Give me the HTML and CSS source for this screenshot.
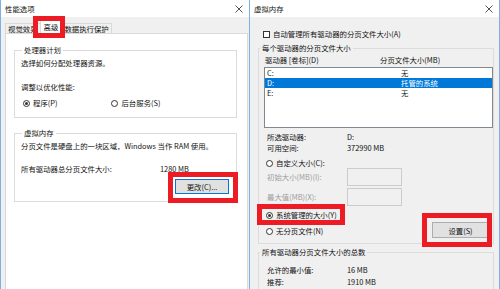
FILE: index.html
```html
<!DOCTYPE html>
<html lang="zh-CN">
<head>
    <meta charset="UTF-8">
    <title>性能选项 - 虚拟内存</title>
    <link rel="stylesheet" href="styles.css">
</head>
<body>
    <div class="screen">
        <div class="window perf">
            <div class="titlebar">
                <span class="title">性能选项</span>
                <svg class="close" width="8" height="8" viewBox="0 0 8 8"><path d="M0.5 0.5L7.5 7.5M7.5 0.5L0.5 7.5"/></svg>
            </div>
            <div class="body">
                <div class="tabs">
                    <div class="tab">视觉效果</div>
                    <div class="tab active">高级</div>
                    <div class="tab">数据执行保护</div>
                </div>
                <div class="tab-page">
                    <fieldset class="group cpu">
                        <legend>处理器计划</legend>
                        <p class="line gap-3">选择如何分配处理器资源。</p>
                        <p class="line gap-14">调整以优化性能:</p>
                        <div class="radios">
                            <label class="radio"><span class="dot checked"></span>程序(P)</label>
                            <label class="radio"><span class="dot"></span>后台服务(S)</label>
                        </div>
                    </fieldset>
                    <fieldset class="group vmem">
                        <legend>虚拟内存</legend>
                        <p class="line gap-3">分页文件是硬盘上的一块区域，Windows 当作 RAM 使用。</p>
                        <div class="line total">
                            <span class="total-label">所有驱动器总分页文件大小:</span>
                            <span>1280 MB</span>
                        </div>
                        <div class="btn-row">
                            <button class="btn default">更改(C)...</button>
                        </div>
                    </fieldset>
                </div>
            </div>
        </div>

        <div class="window vm">
            <div class="titlebar">
                <span class="title">虚拟内存</span>
                <svg class="close" width="8" height="8" viewBox="0 0 8 8"><path d="M0.5 0.5L7.5 7.5M7.5 0.5L0.5 7.5"/></svg>
            </div>
            <div class="body">
                <label class="check"><span class="box"></span>自动管理所有驱动器的分页文件大小(A)</label>

                <fieldset class="group drives">
                    <legend>每个驱动器的分页文件大小</legend>
                    <div class="list-head">
                        <span class="col-drive">驱动器 [卷标](D)</span>
                        <span>分页文件大小(MB)</span>
                    </div>
                    <div class="listbox">
                        <div class="row"><span class="cell-drive">C:</span><span>无</span></div>
                        <div class="row selected"><span class="cell-drive">D:</span><span>托管的系统</span></div>
                        <div class="row"><span class="cell-drive">E:</span><span>无</span></div>
                    </div>
                    <div class="info first"><span class="info-label">所选驱动器:</span><span>D:</span></div>
                    <div class="info"><span class="info-label">可用空间:</span><span>372990 MB</span></div>

                    <label class="radio custom"><span class="dot"></span>自定义大小(C):</label>
                    <div class="field">
                        <span class="info-label">初始大小(MB)(I):</span>
                        <span class="input"></span>
                    </div>
                    <div class="field second">
                        <span class="info-label">最大值(MB)(X):</span>
                        <span class="input"></span>
                    </div>

                    <div class="choose">
                        <div class="choose-radios">
                            <label class="radio"><span class="dot checked"></span>系统管理的大小(Y)</label>
                            <label class="radio none"><span class="dot"></span>无分页文件(N)</label>
                        </div>
                        <button class="btn set">设置(S)</button>
                    </div>
                </fieldset>

                <fieldset class="group totals">
                    <legend>所有驱动器分页文件大小的总数</legend>
                    <div class="info first"><span class="info-label">允许的最小值:</span><span>16 MB</span></div>
                    <div class="info"><span class="info-label">推荐:</span><span>1910 MB</span></div>
                </fieldset>
            </div>
        </div>

        <div class="mark mark-tab"></div>
        <div class="mark mark-change"></div>
        <div class="mark mark-system"></div>
        <div class="mark mark-set"></div>
    </div>
</body>
</html>
```

FILE: styles.css
```css
* {
    margin: 0;
    padding: 0;
    box-sizing: border-box;
    font-family: "Noto Sans CJK SC", "Liberation Sans", sans-serif;
}

body {
    width: 500px;
    height: 289px;
    overflow: hidden;
    background-color: #ffffff;
    font-size: 7.4px;
    line-height: 10px;
    color: #111111;
}

.screen {
    position: relative;
    display: flex;
    width: 500px;
    height: 289px;
}

.window {
    display: flex;
    flex-direction: column;
    height: 289px;
    background-color: #f0f0f0;
    overflow: hidden;
}

.perf {
    flex: 0 0 249px;
    border-left: 1px solid #7db0e4;
}

.vm {
    flex: 0 0 251px;
    border-left: 1px solid #7db0e4;
    border-right: 1px solid #7db0e4;
}

.titlebar {
    flex: 0 0 17px;
    display: flex;
    align-items: center;
    justify-content: space-between;
    padding: 0 6px 0 4px;
    background-color: #ffffff;
}

.close {
    stroke: #3c3c3c;
    stroke-width: 0.9;
    fill: none;
}

.body {
    flex: 1;
    display: flex;
    flex-direction: column;
    min-height: 0;
}

/* tabs */
.tabs {
    display: flex;
    align-items: flex-end;
    height: 16px;
    padding-left: 4px;
}

.tab {
    height: 10px;
    line-height: 9px;
    padding: 0 2px;
    border: 1px solid #d9d9d9;
    border-bottom: none;
    background-color: #f0f0f0;
    white-space: nowrap;
}

.tab.active {
    position: relative;
    height: 14px;
    line-height: 12px;
    padding: 0 3px;
    margin: 0 -1px -1px;
    background-color: #ffffff;
    z-index: 1;
}

.tab-page {
    flex: 1;
    margin: 0 1px 0 4px;
    padding: 0 10px 0 8px;
    background-color: #ffffff;
    border: 1px solid #d9d9d9;
    border-bottom: none;
}

/* group boxes */
.group {
    border: 1px solid #dcdcdc;
    padding: 0;
    min-width: 0;
}

.group legend {
    margin-left: 1px;
    padding: 0 2px;
    line-height: 10px;
}

.cpu {
    margin-top: 11px;
    padding: 0 6px 9px;
}

.vmem {
    margin-top: 10px;
    padding: 0 6px 7px;
}

.line {
    height: 10px;
    white-space: nowrap;
}

.gap-3 {
    margin-top: 3px;
}

.gap-14 {
    margin-top: 14px;
}

.radios {
    display: flex;
    margin-top: 6px;
    padding-left: 2px;
}

.radios .radio + .radio {
    margin-left: 54px;
}

.radio {
    display: flex;
    align-items: center;
    height: 10px;
    white-space: nowrap;
}

.dot {
    position: relative;
    width: 7px;
    height: 7px;
    margin-right: 3px;
    border: 1px solid #333333;
    border-radius: 50%;
    background-color: #ffffff;
}

.dot.checked::after {
    content: "";
    position: absolute;
    left: 1px;
    top: 1px;
    width: 3px;
    height: 3px;
    border-radius: 50%;
    background-color: #333333;
}

.total {
    display: flex;
    margin-top: 13px;
}

.total-label {
    width: 139px;
}

.btn-row {
    display: flex;
    justify-content: flex-end;
    margin-top: 5px;
    padding-right: 1px;
}

.btn {
    height: 15px;
    font-size: 7.4px;
    line-height: 13px;
    background-color: #e1e1e1;
    border: 1px solid #adadad;
    color: #111111;
}

.btn.default {
    width: 54px;
    border-color: #0078d7;
}

/* virtual memory dialog */
.check {
    display: flex;
    align-items: center;
    height: 10px;
    margin-top: 12px;
    padding-left: 13px;
    white-space: nowrap;
}

.box {
    width: 7px;
    height: 7px;
    margin-right: 3px;
    border: 1px solid #333333;
    background-color: #ffffff;
}

.drives {
    margin: 4px 5px 0 8px;
    padding: 0 0 5px;
}

.list-head {
    display: flex;
    margin-top: 2px;
    padding-left: 6px;
    white-space: nowrap;
}

.col-drive {
    width: 115px;
}

.listbox {
    height: 61px;
    margin: 2px 0 0 5px;
    background-color: #ffffff;
    border: 1px solid #828790;
}

.row {
    display: flex;
    height: 10px;
    padding-left: 2px;
}

.cell-drive {
    width: 134px;
}

.row.selected {
    background-color: #0078d7;
    color: #ffffff;
}

.info {
    display: flex;
    height: 10px;
    margin-top: 1px;
    padding-left: 8px;
    white-space: nowrap;
}

.info.first {
    margin-top: 4px;
}

.info-label {
    width: 80px;
}

.radio.custom {
    margin-top: 5px;
    padding-left: 7px;
}

.field {
    display: flex;
    align-items: center;
    height: 18px;
    padding-left: 8px;
    color: #9d9d9d;
    white-space: nowrap;
}

.field.second {
    margin-top: 2px;
}

.input {
    width: 55px;
    height: 18px;
    border: 1px solid #cccccc;
    background-color: #f0f0f0;
}

.choose {
    display: flex;
    margin-top: 4px;
    padding-left: 7px;
}

.radio.none {
    margin-top: 6px;
}

.btn.set {
    width: 57px;
    height: 16px;
    margin: 12px 4px 0 auto;
}

.totals {
    margin: 3px 5px 0 8px;
    padding: 0 0 4px;
}

.totals .info.first {
    margin-top: 8px;
}

.totals .info + .info {
    margin-top: 2px;
}

/* red highlight frames */
.mark {
    position: absolute;
    border: 5px solid #ed1c24;
    z-index: 2;
}

.mark-tab {
    left: 33px;
    top: 16px;
    width: 32px;
    height: 22px;
}

.mark-change {
    left: 168px;
    top: 172px;
    width: 70px;
    height: 31px;
}

.mark-system {
    left: 257px;
    top: 204px;
    width: 88px;
    height: 21px;
}

.mark-set {
    left: 422px;
    top: 213px;
    width: 70px;
    height: 34px;
}
```
